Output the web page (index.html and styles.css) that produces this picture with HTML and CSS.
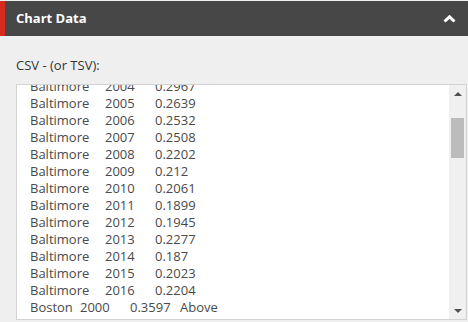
FILE: index.html
```html
<!DOCTYPE html>
<html lang="en">
<head>
  <meta charset="UTF-8" />
  <title>Chart Data</title>
  <link rel="stylesheet" href="styles.css">
</head>
<body>

  <!-- CABEÇALHO DO PAINEL -->
  <div class="panel-header">
    <span class="panel-title">Chart Data</span>
    <svg class="chevron" width="13" height="8" viewBox="0 0 13 8">
      <path d="M1.5 6.5 L6.5 1.8 L11.5 6.5" fill="none" stroke="#fff" stroke-width="3" stroke-linejoin="miter" />
    </svg>
  </div>

  <div class="panel-body">
    <label class="csv-label">CSV - (or TSV):</label>

    <div class="csv-box">
      <div class="csv-text">
<pre class="csv-lines">Baltimore	2004	0.2967
Baltimore	2005	0.2639
Baltimore	2006	0.2532
Baltimore	2007	0.2508
Baltimore	2008	0.2202
Baltimore	2009	0.212
Baltimore	2010	0.2061
Baltimore	2011	0.1899
Baltimore	2012	0.1945
Baltimore	2013	0.2277
Baltimore	2014	0.187
Baltimore	2015	0.2023
Baltimore	2016	0.2204
Boston	2000	0.3597	Above</pre>
      </div>

      <!-- barra de rolagem -->
      <div class="scrollbar">
        <div class="scroll-btn"><span class="arrow-up"></span></div>
        <div class="scroll-track">
          <div class="scroll-thumb"></div>
        </div>
        <div class="scroll-btn"><span class="arrow-down"></span></div>
      </div>
    </div>
  </div>

</body>
</html>
```

FILE: styles.css
```css
body {
  margin: 0;
  background: #efefef;
  font-family: 'Open Sans', 'Liberation Sans', sans-serif;
  color: #333;
  height: 322px;
  overflow: hidden;
}

.panel-header {
  margin-top: 1px;
  height: 35px;
  background: #474747;
  border-left: 5px solid #d42a20;
  padding: 0 11px 0 11px;
  display: flex;
  align-items: center;
  justify-content: space-between;
}

.panel-title {
  color: #fff;
  font-size: 13px;
  font-weight: bold;
  margin-top: -1px;
}

.chevron {
  display: block;
  margin-right: 1px;
}

.panel-body {
  padding: 20px 1px 0 16px;
}

.csv-label {
  display: block;
  font-size: 13px;
  line-height: 18px;
  color: #333;
  margin-bottom: 10px;
}

.csv-box {
  display: flex;
  height: 234px;
  background: #fff;
  border: 1px solid #d3d3d3;
}

.csv-text {
  flex: 1;
  overflow: hidden;
  padding-left: 13px;
}

.csv-lines {
  margin: -7px 0 0 0;
  font-family: 'Open Sans', 'Liberation Sans', sans-serif;
  font-size: 13px;
  line-height: 17px;
  color: #4a4a4a;
  white-space: pre;
  tab-size: 25px;
}

.scrollbar {
  width: 17px;
  background: #f0f0f0;
  display: flex;
  flex-direction: column;
}

.scroll-btn {
  height: 17px;
  display: flex;
  align-items: center;
  justify-content: center;
}

.arrow-up,
.arrow-down {
  width: 0;
  height: 0;
  border-left: 4px solid transparent;
  border-right: 4px solid transparent;
}

.arrow-up {
  border-bottom: 4px solid #505050;
}

.arrow-down {
  border-top: 4px solid #505050;
}

.scroll-track {
  flex: 1;
}

.scroll-thumb {
  margin: 16px 2px 0 2px;
  height: 40px;
  background: #bcbcbc;
}
```
